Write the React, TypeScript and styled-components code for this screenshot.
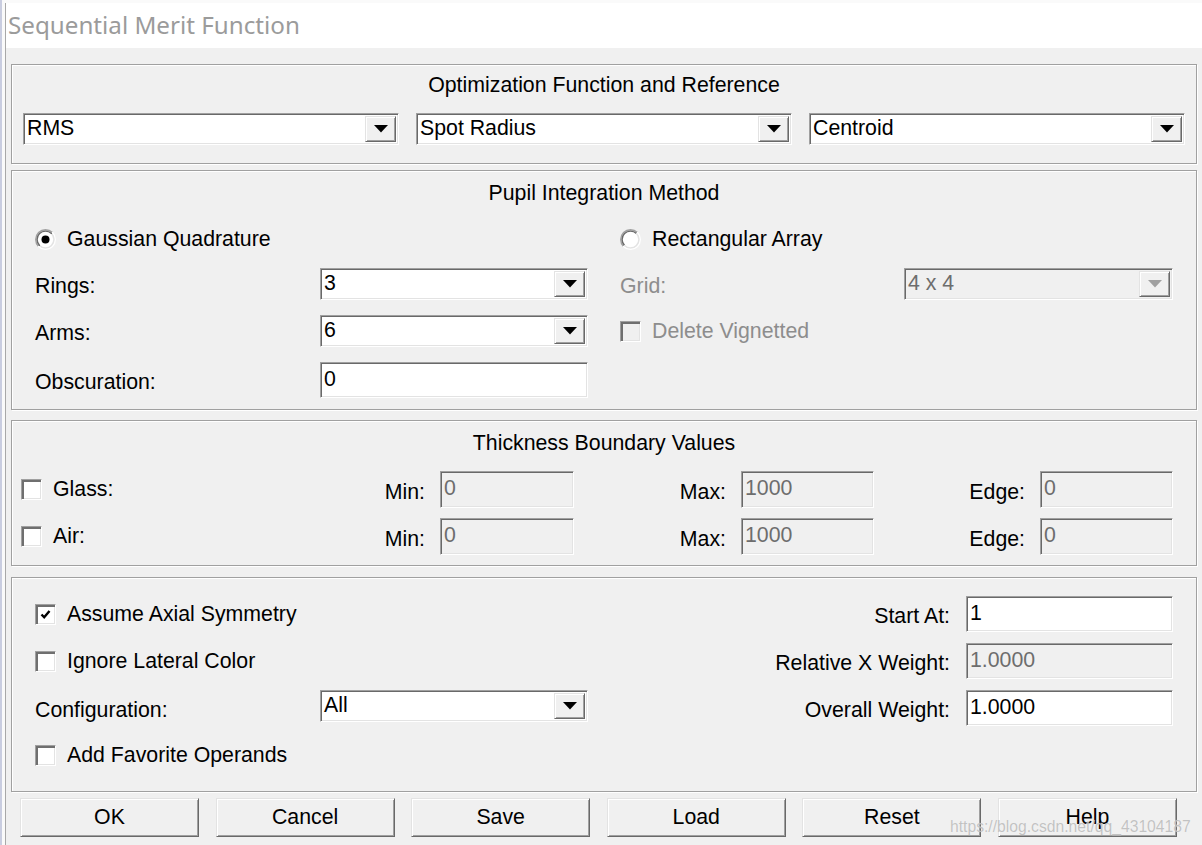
import React from 'react';
import styled, { createGlobalStyle } from 'styled-components';

const GlobalStyle = createGlobalStyle`
  html, body {
    margin: 0;
    padding: 0;
    background: #ffffff;
    overflow: hidden;
  }
  body {
    font-family: "Liberation Sans", Arial, sans-serif;
  }
`;

const FONT = 21.3;

const Screen = styled.div`
  width: 1202px;
  height: 845px;
  padding: 3px 0 0 3px;
  box-sizing: border-box;
  background: #fafafa;
  border-left: 2px solid #c9cde0;
`;

const Dialog = styled.div`
  position: relative;
  display: flex;
  flex-direction: column;
  height: 100%;
  border-left: 1px solid #a8a8a8;
  background: #f0f0f0;
`;

const TitleBar = styled.div`
  height: 45px;
  flex-shrink: 0;
  display: flex;
  align-items: center;
  padding: 0 0 2px 2px;
  box-sizing: border-box;
  background: #ffffff;
  font-family: "Noto Sans", "Open Sans", sans-serif;
  font-size: 24.2px;
  color: #9b9b9b;
`;

const Body = styled.div`
  flex: 1;
  padding: 16px 5px 0 5px;
  display: flex;
  flex-direction: column;
`;

const GroupBox = styled.div<{ $h: number; $mt?: number }>`
  height: ${({ $h }) => $h}px;
  margin-top: ${({ $mt }) => $mt ?? 0}px;
  box-sizing: border-box;
  border: 1px solid #a0a0a0;
  box-shadow: 1px 1px 0 #ffffff, inset 1px 1px 0 #ffffff;
  display: flex;
  flex-direction: column;
`;

const GroupTitle = styled.div<{ $pt: number }>`
  margin-top: ${({ $pt }) => $pt}px;
  height: 24px;
  line-height: 24px;
  text-align: center;
  font-size: ${FONT}px;
  color: #000;
`;

const RefRow = styled.div`
  margin-top: 16px;
  padding: 0 11px;
  display: grid;
  grid-template-columns: repeat(3, 1fr);
  column-gap: 17px;
`;

const PupilGrid = styled.div`
  margin-top: 21px;
  padding-left: 23px;
  display: grid;
  grid-template-columns: 285px 268px 32px 284px 269px;
  grid-template-rows: 27px 32px 32px 36px;
  row-gap: 15px;
  align-items: center;
`;

const ThickGrid = styled.div`
  margin-top: 16px;
  padding-left: 9px;
  display: grid;
  grid-template-columns: 350px 203px 300px 299px;
  grid-template-rows: 37px 37px;
  row-gap: 10px;
  align-items: center;
`;

const OptionsGrid = styled.div`
  margin-top: 18px;
  padding: 0 23px;
  display: grid;
  grid-template-columns: 285px 268px 1fr auto 207px;
  grid-template-rows: repeat(4, 36px);
  row-gap: 11px;
  align-items: center;
`;

const Label = styled.span<{ $disabled?: boolean; $right?: boolean }>`
  font-size: ${FONT}px;
  line-height: 24px;
  white-space: nowrap;
  color: ${({ $disabled }) => ($disabled ? '#8d8d8d' : '#000')};
  justify-self: ${({ $right }) => ($right ? 'end' : 'start')};
  margin-right: ${({ $right }) => ($right ? '16px' : '0')};
  padding-top: 4px;
`;

const Cell = styled.div<{ $span?: string; $end?: boolean }>`
  display: flex;
  align-items: center;
  gap: 15px;
  grid-column: ${({ $span }) => $span ?? 'auto'};
  justify-content: ${({ $end }) => ($end ? 'flex-end' : 'flex-start')};
`;

const OptionLine = styled.label<{ $disabled?: boolean }>`
  display: flex;
  align-items: center;
  gap: 11px;
  font-size: ${FONT}px;
  white-space: nowrap;
  color: ${({ $disabled }) => ($disabled ? '#8d8d8d' : '#000')};
`;

const sunken = `
  box-sizing: border-box;
  border: 1px solid;
  border-color: #a0a0a0 #ffffff #ffffff #a0a0a0;
  box-shadow: inset 1px 1px 0 #696969, inset -1px -1px 0 #e3e3e3;
`;

const TextField = styled.div<{ $w?: number; $disabled?: boolean; $h?: number }>`
  ${sunken}
  width: ${({ $w }) => ($w ? `${$w}px` : '100%')};
  height: ${({ $h }) => $h ?? 36}px;
  padding: 4px 0 0 3px;
  font-size: ${FONT}px;
  line-height: 24px;
  white-space: nowrap;
  background: ${({ $disabled }) => ($disabled ? '#f0f0f0' : '#ffffff')};
  color: ${({ $disabled }) => ($disabled ? '#6d6d6d' : '#000')};
`;

const Combo = styled.div<{ $disabled?: boolean; $h?: number }>`
  ${sunken}
  height: ${({ $h }) => $h ?? 32}px;
  align-self: start;
  display: flex;
  align-items: stretch;
  padding: 2px 2px 2px 3px;
  background: ${({ $disabled }) => ($disabled ? '#f0f0f0' : '#ffffff')};
  color: ${({ $disabled }) => ($disabled ? '#6d6d6d' : '#000')};
`;

const ComboText = styled.div`
  flex: 1;
  font-size: ${FONT}px;
  line-height: 24px;
  white-space: nowrap;
`;

const ComboButton = styled.div<{ $disabled?: boolean }>`
  width: 31px;
  box-sizing: border-box;
  display: flex;
  align-items: center;
  justify-content: center;
  background: #f0f0f0;
  border: 1px solid;
  border-color: #e3e3e3 #696969 #696969 #e3e3e3;
  box-shadow: inset 1px 1px 0 #ffffff, inset -1px -1px 0 #a0a0a0;
  color: ${({ $disabled }) => ($disabled ? '#a0a0a0' : '#000')};
`;

const Box = styled.span<{ $disabled?: boolean }>`
  ${sunken}
  width: 21px;
  height: 21px;
  flex-shrink: 0;
  display: inline-flex;
  align-items: center;
  justify-content: center;
  box-shadow: inset 2px 2px 0 #6f6f6f, inset -1px -1px 0 #e3e3e3;
  background: ${({ $disabled }) => ($disabled ? '#f0f0f0' : '#ffffff')};
`;

const ButtonRow = styled.div`
  margin: 6px 0 0 9px;
  display: grid;
  grid-template-columns: repeat(6, 179px);
  column-gap: 16.6px;
`;

const PushButton = styled.button`
  height: 39px;
  box-sizing: border-box;
  padding: 0;
  font-family: "Liberation Sans", Arial, sans-serif;
  font-size: ${FONT}px;
  color: #000;
  background: #f0f0f0;
  border: 1px solid;
  border-color: #e3e3e3 #696969 #696969 #e3e3e3;
  box-shadow: inset 1px 1px 0 #ffffff, inset -1px -1px 0 #a0a0a0;
`;

// csdn watermark baked into the screenshot
const Watermark = styled.div`
  position: absolute;
  left: 944px;
  top: 815px;
  font-size: 15.7px;
  white-space: nowrap;
  color: rgba(185, 185, 185, 0.85);
  pointer-events: none;
  text-shadow: 0 0 1px rgba(255, 255, 255, 0.6);
`;

const Arrow = () => (
  <svg width="14" height="8" viewBox="0 0 14 8">
    <path d="M0 0 H14 L7 7.5 Z" fill="currentColor" />
  </svg>
);

const Dropdown: React.FC<{ value: string; disabled?: boolean }> = ({ value, disabled }) => (
  <Combo $disabled={disabled}>
    <ComboText>{value}</ComboText>
    <ComboButton $disabled={disabled}>
      <Arrow />
    </ComboButton>
  </Combo>
);

const Check: React.FC<{ checked?: boolean; disabled?: boolean }> = ({ checked, disabled }) => (
  <Box $disabled={disabled}>
    {checked && (
      <svg width="11" height="11" viewBox="0 0 11 11">
        <path d="M1.5 5.5 L4.2 8.3 L9.5 2" fill="none" stroke="#000" strokeWidth="2.4" />
      </svg>
    )}
  </Box>
);

const Radio: React.FC<{ checked?: boolean }> = ({ checked }) => (
  <svg width="21" height="21" viewBox="0 0 21 21">
    <defs>
      <linearGradient id="rOuter" x1="0" y1="0" x2="1" y2="1">
        <stop offset="0.5" stopColor="#a0a0a0" />
        <stop offset="0.5" stopColor="#ffffff" />
      </linearGradient>
      <linearGradient id="rInner" x1="0" y1="0" x2="1" y2="1">
        <stop offset="0.5" stopColor="#696969" />
        <stop offset="0.5" stopColor="#e3e3e3" />
      </linearGradient>
    </defs>
    <circle cx="10.5" cy="10.5" r="9.8" fill="none" stroke="url(#rOuter)" strokeWidth="1.4" />
    <circle cx="10.5" cy="10.5" r="8.4" fill="#fff" stroke="url(#rInner)" strokeWidth="1.4" />
    {checked && <circle cx="10.5" cy="10.5" r="4" fill="#000" />}
  </svg>
);

const ThickRow: React.FC<{ name: string }> = ({ name }) => (
  <>
    <OptionLine>
      <Check />
      {name}
    </OptionLine>
    <Cell $end>
      <Label>Min:</Label>
      <TextField $w={134} $h={37} $disabled>0</TextField>
    </Cell>
    <Cell $end>
      <Label>Max:</Label>
      <TextField $w={133} $h={37} $disabled>1000</TextField>
    </Cell>
    <Cell $end>
      <Label>Edge:</Label>
      <TextField $w={133} $h={37} $disabled>0</TextField>
    </Cell>
  </>
);

export default function App() {
  return (
    <Screen>
      <GlobalStyle />
      <Dialog>
        <TitleBar>Sequential Merit Function</TitleBar>
        <Body>
          <GroupBox $h={100}>
            <GroupTitle $pt={8}>Optimization Function and Reference</GroupTitle>
            <RefRow>
              <Dropdown value="RMS" />
              <Dropdown value="Spot Radius" />
              <Dropdown value="Centroid" />
            </RefRow>
          </GroupBox>

          <GroupBox $h={240} $mt={6}>
            <GroupTitle $pt={10}>Pupil Integration Method</GroupTitle>
            <PupilGrid>
              <Cell $span="1 / 3">
                <OptionLine>
                  <Radio checked />
                  Gaussian Quadrature
                </OptionLine>
              </Cell>
              <Cell $span="4 / 6">
                <OptionLine>
                  <Radio />
                  Rectangular Array
                </OptionLine>
              </Cell>

              <Label>Rings:</Label>
              <Dropdown value="3" />
              <span />
              <Label $disabled>Grid:</Label>
              <Dropdown value="4 x 4" disabled />

              <Label>Arms:</Label>
              <Dropdown value="6" />
              <span />
              <Cell $span="4 / 6">
                <OptionLine $disabled>
                  <Check disabled />
                  Delete Vignetted
                </OptionLine>
              </Cell>

              <Label>Obscuration:</Label>
              <TextField>0</TextField>
            </PupilGrid>
          </GroupBox>

          <GroupBox $h={146} $mt={10}>
            <GroupTitle $pt={10}>Thickness Boundary Values</GroupTitle>
            <ThickGrid>
              <ThickRow name="Glass:" />
              <ThickRow name="Air:" />
            </ThickGrid>
          </GroupBox>

          <GroupBox $h={215} $mt={11}>
            <OptionsGrid>
              <Cell $span="1 / 3">
                <OptionLine>
                  <Check checked />
                  Assume Axial Symmetry
                </OptionLine>
              </Cell>
              <span />
              <Label $right>Start At:</Label>
              <TextField>1</TextField>

              <Cell $span="1 / 3">
                <OptionLine>
                  <Check />
                  Ignore Lateral Color
                </OptionLine>
              </Cell>
              <span />
              <Label $right>Relative X Weight:</Label>
              <TextField $disabled>1.0000</TextField>

              <Label>Configuration:</Label>
              <Dropdown value="All" />
              <span />
              <Label $right>Overall Weight:</Label>
              <TextField>1.0000</TextField>

              <Cell $span="1 / 3">
                <OptionLine>
                  <Check />
                  Add Favorite Operands
                </OptionLine>
              </Cell>
            </OptionsGrid>
          </GroupBox>

          <ButtonRow>
            <PushButton>OK</PushButton>
            <PushButton>Cancel</PushButton>
            <PushButton>Save</PushButton>
            <PushButton>Load</PushButton>
            <PushButton>Reset</PushButton>
            <PushButton>Help</PushButton>
          </ButtonRow>
        </Body>
        <Watermark>https://blog.csdn.net/qq_43104187</Watermark>
      </Dialog>
    </Screen>
  );
}
